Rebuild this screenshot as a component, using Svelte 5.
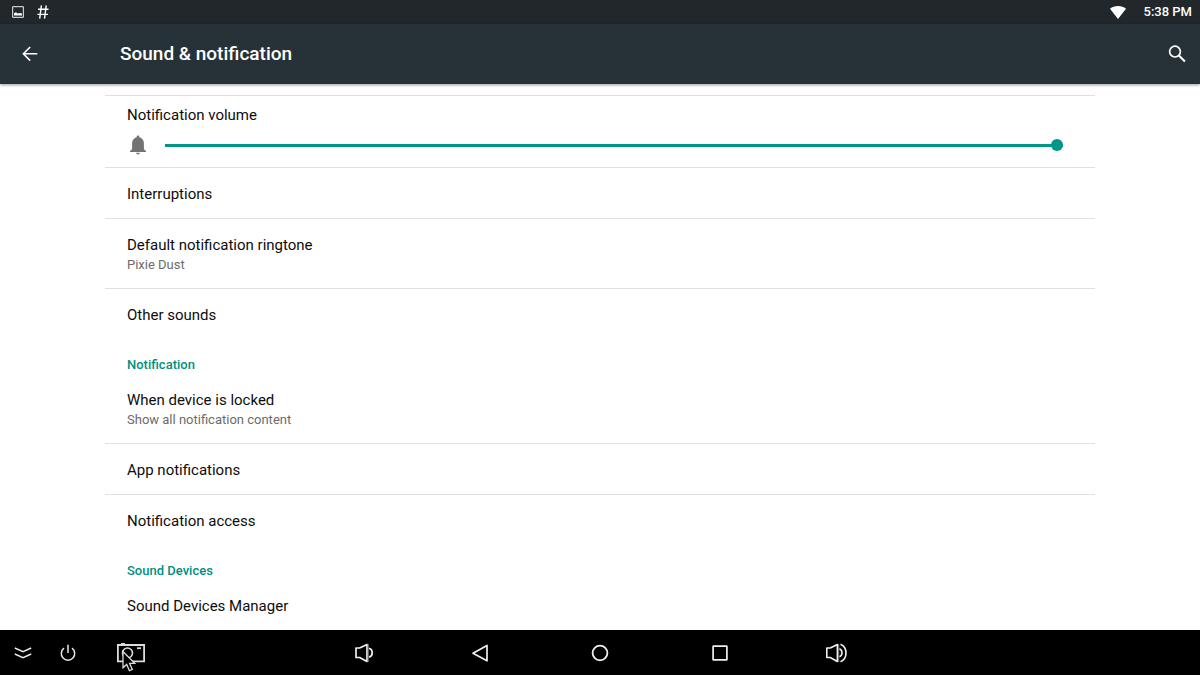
<script>
  let volume = $state(100);

  const sections = [
    {
      title: '',
      rows: [
        { label: 'Interruptions' },
        { label: 'Default notification ringtone', detail: 'Pixie Dust' },
        { label: 'Other sounds' }
      ]
    },
    {
      title: 'Notification',
      rows: [
        { label: 'When device is locked', detail: 'Show all notification content' },
        { label: 'App notifications' },
        { label: 'Notification access' }
      ]
    },
    {
      title: 'Sound Devices',
      rows: [{ label: 'Sound Devices Manager' }]
    }
  ];
</script>

<div class="screen">
  <div class="status">
    <div class="group">
      <svg width="12" height="12" viewBox="0 0 12 12" aria-hidden="true">
        <rect x="0.6" y="0.6" width="10.8" height="10.8" rx="0.6" fill="none" stroke="#c8cacb" stroke-width="1.2" />
        <path d="M2 9.600V7.200L4 6.300l1.600 1.200L8 7l2 .6v2z" fill="#fff" />
      </svg>
      <svg width="12" height="14" viewBox="0 0 12 14" fill="none" stroke="#fff" stroke-width="1.4" aria-hidden="true">
        <path d="M4.4 0.3L2.7 13.7M9.2 0.3L7.5 13.7M1 4.3h10.5M0.4 9.4h10.5" />
      </svg>
    </div>
    <div class="group right">
      <svg width="16" height="13" viewBox="0 0 16 13" fill="#fff" aria-hidden="true">
        <path d="M8 13L0 2.8C2 1 5 0 8 0s6 1 8 2.8z" />
      </svg>
      <time>5:38 PM</time>
    </div>
  </div>

  <header>
    <button class="back" aria-label="Back">
      <svg width="16" height="16" viewBox="0 0 16 16" fill="none" stroke="#fff" stroke-width="1.6">
        <path d="M15.3 7.8H1.4M8.2 1L1.4 7.8l6.8 6.8" />
      </svg>
    </button>
    <h1>Sound &amp; notification</h1>
    <button class="search" aria-label="Search">
      <svg width="18" height="18" viewBox="0 0 18 18" fill="none" stroke="#fff" stroke-width="1.7">
        <circle cx="7" cy="6.600" r="5.400" />
        <path d="M10.900 10.500l6 6" stroke-width="2" />
      </svg>
    </button>
  </header>

  <main>
    <div class="volume">
      <label for="volume">Notification volume</label>
      <div class="slider">
        <svg width="16" height="20" viewBox="0 0 16 20" fill="#737373" aria-hidden="true">
          <path d="M8 19.4c1 0 1.8-.7 1.8-1.6H6.2c0 .9.8 1.6 1.8 1.6zM13.9 14.3V8.2c0-2.9-1.8-5.2-4.6-5.9v-.6C9.300.9 8.700.4 8 .4S6.700.9 6.700 1.700v.6C3.900 3 2.100 5.300 2.100 8.200v6.100L0 16v.9h16V16z" />
        </svg>
        <input id="volume" type="range" min="0" max="100" bind:value={volume} style="--level: {volume}%" />
      </div>
    </div>
    {#each sections as section}
      <section>
        {#if section.title}<h2>{section.title}</h2>{/if}
        {#each section.rows as row}
          <button class="row">
            <span>{row.label}</span>
            {#if row.detail}<small>{row.detail}</small>{/if}
          </button>
        {/each}
      </section>
    {/each}
  </main>

  <nav>
    <div class="tools">
      <button aria-label="Hide bar">
        <svg width="18" height="12" viewBox="0 0 18 12" fill="none" stroke="#e8e8e8" stroke-width="1.5">
          <path d="M0.8 1L9 4.600 17.200 1M0.800 7L9 10.600 17.200 7" />
        </svg>
      </button>
      <button aria-label="Power">
        <svg width="16" height="18" viewBox="0 0 16 18" fill="none" stroke="#e8e8e8" stroke-width="1.500">
          <path d="M8 0.800v8.200M4 4.200a6.700 6.700 0 1 0 8 0" />
        </svg>
      </button>
      <button class="shot" aria-label="Screenshot">
        <svg width="28" height="20" viewBox="0 0 28 20" fill="none" stroke="#dcdcdc" stroke-width="1.800">
          <path d="M0.900 2h26.200v16.400H0.900z" />
          <path d="M4 0.800h4" />
          <path d="M20 5.200h4" />
          <circle cx="10.500" cy="10" r="5" stroke-width="1.600" />
        </svg>
        <svg class="pointer" width="14" height="22" viewBox="0 0 14 22" fill="#000" stroke="#dcdcdc" stroke-width="1.300">
          <path d="M1 1.500v16.300l3.700-3.400 2.700 6.300 2.900-1.200-2.700-6.200h5z" />
        </svg>
      </button>
    </div>
    <div class="keys">
      <button class="edge" aria-label="Volume down">
        <svg width="20" height="20" viewBox="0 0 20 20" fill="none" stroke="#f0f0f0" stroke-width="1.700">
          <path d="M2 5h3.600L13 1.500v17L5.600 14.500H2z" stroke-linejoin="round" />
          <path d="M15 5.300c4.300 1.200 4.300 7.800 0 9" />
          <path d="M14.200 1v18" stroke="#888" stroke-width="1" />
        </svg>
      </button>
      <button aria-label="Back">
        <svg width="18" height="18" viewBox="0 0 18 18" fill="none" stroke="#f0f0f0" stroke-width="1.700">
          <path d="M16 1.500v15.300L2 9.200z" stroke-linejoin="round" />
        </svg>
      </button>
      <button aria-label="Home">
        <svg width="18" height="18" viewBox="0 0 18 18" fill="none" stroke="#f0f0f0" stroke-width="1.800">
          <circle cx="9" cy="9" r="7.400" />
        </svg>
      </button>
      <button aria-label="Recent apps">
        <svg width="16" height="16" viewBox="0 0 16 16" fill="none" stroke="#f0f0f0" stroke-width="1.700">
          <rect x="1.100" y="1.100" width="13.800" height="13.800" rx="0.500" />
        </svg>
      </button>
      <button class="edge" aria-label="Volume up">
        <svg width="22" height="20" viewBox="0 0 22 20" fill="none" stroke="#f0f0f0" stroke-width="1.600">
          <path d="M1.800 5h3.400L12.400 1.500v17L5.200 14.500H1.800z" stroke-linejoin="round" />
          <path d="M14.400 5.800c3.400 1.200 3.400 6.800 0 8" />
          <path d="M15.500 1.300c7.300 3 7.300 14.400 0 17.400" />
          <path d="M13.700 1v18" stroke="#888" stroke-width="1" />
        </svg>
      </button>
    </div>
  </nav>
</div>

<style>
  :global(body) {
    margin: 0;
    background: #fff;
  }
  .screen {
    min-height: 100vh;
    display: flex;
    flex-direction: column;
    font-family: Roboto, sans-serif;
    font-size: 15px;
    line-height: 20px;
    color: #0d0d0d;
  }
  button {
    display: flex;
    align-items: center;
    justify-content: center;
    margin: 0;
    padding: 0;
    border: 0;
    background: none;
    color: inherit;
    font: inherit;
  }
  svg {
    flex: none;
    display: block;
  }
  .status {
    display: flex;
    align-items: center;
    justify-content: space-between;
    height: 24px;
    padding: 0 8px 0 12px;
    background: #21272a;
    color: #fff;
    font-size: 13px;
    font-weight: 500;
  }
  .group {
    display: flex;
    align-items: center;
    gap: 13px;
  }
  .right {
    gap: 18px;
  }
  header {
    position: relative;
    display: flex;
    align-items: center;
    height: 60px;
    background: #263238;
    color: #fff;
    box-shadow: 0 1px 3px rgba(0, 0, 0, 0.4);
  }
  .back {
    width: 60px;
    height: 60px;
  }
  h1 {
    flex: 1;
    margin: 0;
    padding-left: 60px;
    font-size: 19px;
    line-height: 24px;
    font-weight: 500;
  }
  .search {
    width: 46px;
    height: 60px;
  }
  main {
    flex: 1;
    padding: 11px 8.75% 0;
  }
  .volume {
    padding: 9px 32px 12px 22px;
    border-top: 1px solid #e0e0e0;
    border-bottom: 1px solid #e0e0e0;
  }
  .volume label {
    display: block;
  }
  .slider {
    display: flex;
    align-items: center;
    gap: 19px;
    padding: 0 0 0 3px;
    height: 20px;
    margin-top: 10px;
  }
  input {
    flex: 1;
    min-width: 0;
    height: 12px;
    margin: 0;
    appearance: none;
    background: linear-gradient(#009688, #009688) left center / var(--level) 3px no-repeat,
      linear-gradient(#bdbdbd, #bdbdbd) center / 100% 1px no-repeat;
  }
  input::-webkit-slider-thumb {
    appearance: none;
    width: 12px;
    height: 12px;
    border-radius: 50%;
    background: #009688;
  }
  .row {
    width: 100%;
    flex-direction: column;
    align-items: flex-start;
    padding: 16px 22px 14px;
    text-align: left;
  }
  .row + .row {
    border-top: 1px solid #e0e0e0;
  }
  small {
    font-size: 13px;
    line-height: 19px;
    color: #6c6c6c;
  }
  h2 {
    margin: 0;
    padding: 16px 22px 0;
    font-size: 13px;
    line-height: 19px;
    font-weight: 500;
    color: #009080;
  }
  nav {
    display: grid;
    grid-template-columns: 1fr auto 1fr;
    height: 45px;
    background: #000;
  }
  .tools,
  .keys {
    display: flex;
  }
  .tools button {
    width: 45px;
  }
  .tools .shot {
    position: relative;
    width: 82px;
  }
  .pointer {
    position: absolute;
    left: 32px;
    top: 20px;
  }
  .keys button {
    width: 120px;
  }
  .keys .edge {
    width: 112px;
  }
</style>
